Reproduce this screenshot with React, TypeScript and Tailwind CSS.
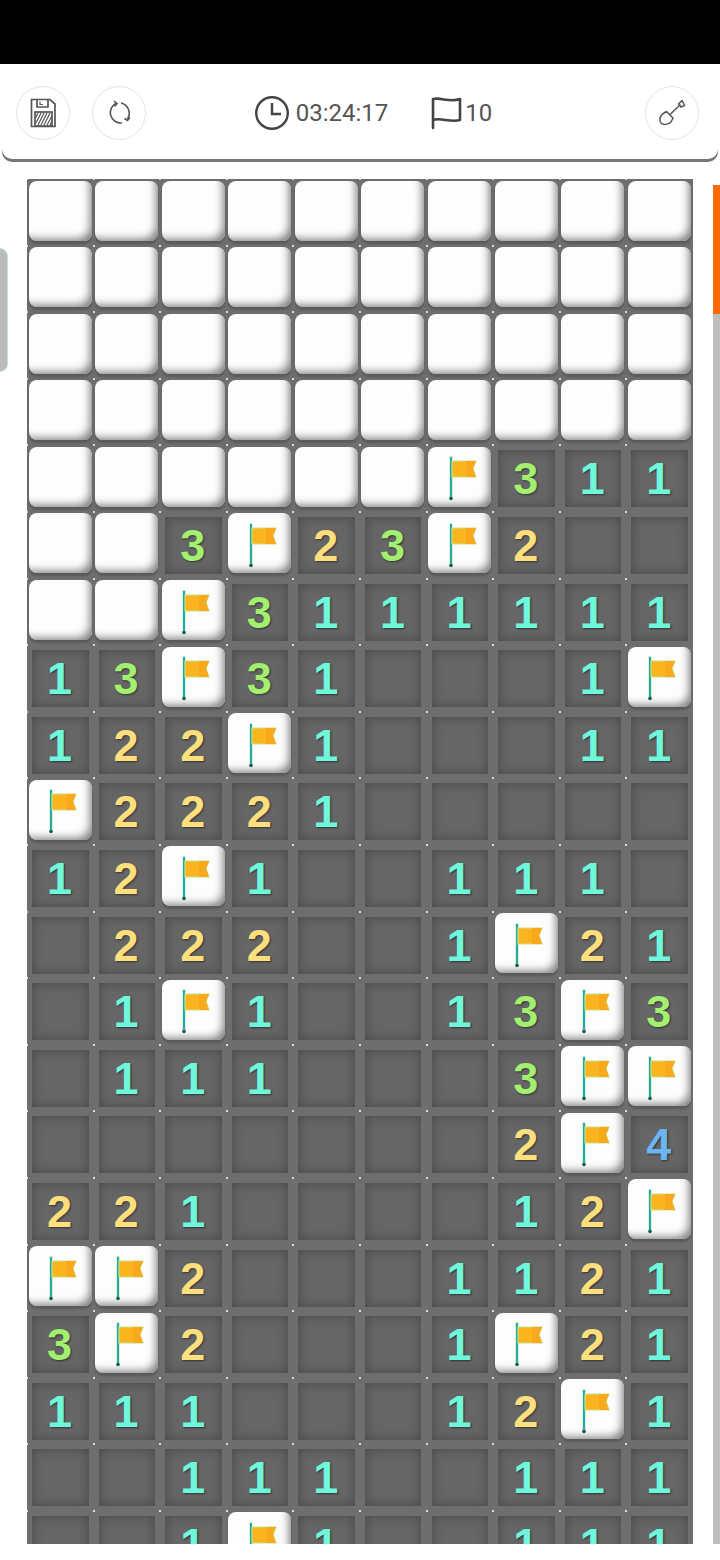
import React from 'react';

const rows = [
  'hhhhhhhhhh',
  'hhhhhhhhhh',
  'hhhhhhhhhh',
  'hhhhhhhhhh',
  'hhhhhhf311',
  'hh3f23f2..',
  'hhf3111111',
  '13f31...1f',
  '122f1...11',
  'f2221.....',
  '12f1..111.',
  '.222..1f21',
  '.1f1..13f3',
  '.111...3ff',
  '.......2f4',
  '221....12f',
  'ff2...1121',
  '3f2...1f21',
  '111...12f1',
  '..111..111',
  '..1f1..111',
];

const numberColors: Record<string, string> = {
  '1': 'text-[#6ff7dc]',
  '2': 'text-[#fddf7e]',
  '3': 'text-[#a3ef6f]',
  '4': 'text-[#6db4f2]',
};

function FlagIcon() {
  return (
    <svg viewBox="0 0 66 66" className="w-[66px] h-[66px]">
      <rect x="22.3" y="11" width="3.4" height="43" fill="#a6e8b0" opacity="0.6" />
      <rect x="23" y="12" width="2" height="42" fill="#2aa7a0" />
      <circle cx="24" cy="53.5" r="1.8" fill="#1c5d4f" />
      <path d="M25 16H49L46 23.5L49 32H25Z" fill="#fbb41e" stroke="#c3e48a" strokeWidth="1.2" />
      <path d="M39 16H49L46 23.5L49 32H39Z" fill="#f9a91c" />
    </svg>
  );
}

function Cell({ value }: { value: string }) {
  const covered = value === 'h' || value === 'f';
  return (
    <div className="relative">
      {covered ? (
        <div className="absolute left-[1.5px] top-[1.5px] w-[63px] h-[60px] rounded-lg bg-[#fdfdfd] shadow-[inset_-7px_-7px_9px_-5px_#808080,0_3px_2px_#5a5a5a] overflow-hidden">
          {value === 'f' && (
            <div className="absolute left-[-1.5px] top-[-1.5px]">
              <FlagIcon />
            </div>
          )}
        </div>
      ) : (
        <div className="absolute left-[5px] top-[5px] w-[56.5px] h-[57px] pr-[1.5px] bg-[#666666] shadow-[inset_0_0_12px_#484848] flex items-center justify-center">
          {value !== '.' && (
            <span className={`font-['Liberation_Sans',sans-serif] text-[45px] leading-none font-bold [text-shadow:1px_1px_2px_#333] ${numberColors[value]}`}>
              {value}
            </span>
          )}
        </div>
      )}
      <div className="absolute left-[-1px] top-[-1px] w-[2px] h-[2px] bg-white rounded-full" />
    </div>
  );
}

function RoundButton({ children }: { children: React.ReactNode }) {
  return (
    <div className="w-[54px] h-[54px] rounded-full bg-white border border-[#e4e4e4] flex items-center justify-center">
      {children}
    </div>
  );
}

export default function App() {
  return (
    <div className="w-[720px] h-[1560px] bg-white overflow-hidden font-['Roboto',sans-serif] flex flex-col">
      <div className="h-16 bg-black shrink-0" />
      <header className="h-[95px] mb-[3px] shrink-0 mx-[2px] bg-white shadow-[0_3px_0_#777] rounded-b-[10px] flex items-center justify-between pl-[14px] pr-[19px] pt-[2px]">
        <div className="flex gap-[22px]">
          <RoundButton>
            <svg width="26" height="30" viewBox="0 0 26 30" fill="none" stroke="#555" strokeWidth="1.7">
              <path d="M1.5 1.5H20L25 6V28.5H1.5Z" />
              <path d="M7 1.5V9H18V1.5" />
              <path d="M10 3.5V6.5H13" strokeWidth="1.2" />
              <rect x="5" y="14" width="17" height="14" fill="#fff" />
              <path d="M6 25L11 15M8 27L14 15M11 27L17 15M14 27L20 15M17 27L22 18M20 27L22 23M5.5 20L8 15" strokeWidth="1.2" />
            </svg>
          </RoundButton>
          <RoundButton>
            <svg width="26" height="26" viewBox="0 0 26 26" fill="none" stroke="#555" strokeWidth="1.6">
              <path d="M10.5 3A10.5 10.5 0 0 0 16 23" />
              <path d="M15 3A10.5 10.5 0 0 1 21.5 19" />
              <path d="M8 1L11 3.5L8.5 6.5" />
              <path d="M18.5 18.5L21.5 20.5L24 17.5" />
            </svg>
          </RoundButton>
        </div>
        <div className="flex items-center ml-[-45px] text-[24px] text-[#555]">
          <svg width="36" height="36" viewBox="0 0 36 36" fill="none" stroke="#444" strokeWidth="2.4" className="mr-[6px]">
            <circle cx="18" cy="18" r="15.8" />
            <path d="M18 8V19H27" />
          </svg>
          <span>03:24:17</span>
          <svg width="32" height="34" viewBox="0 0 32 34" fill="none" stroke="#444" strokeWidth="2.6" strokeLinecap="round" strokeLinejoin="round" className="ml-[42px] mr-[3px]">
            <path d="M3 32V3C11 1 20 7 30 3V24C20 27 11 21 3 24" />
          </svg>
          <span>10</span>
        </div>
        <RoundButton>
          <svg width="28" height="28" viewBox="0 0 28 28" fill="none" stroke="#555" strokeWidth="1.5" strokeLinejoin="round">
            <path d="M8.5 12.5L15 19L13 23C10 26 5 26 3 24C1 22 2 17 4.5 15Z" />
            <path d="M12 15.5L22.5 5.5" />
            <path d="M20.5 5L24 1.5L26.5 6.5L23 8Z" />
          </svg>
        </RoundButton>
      </header>
      <main className="relative h-[1382px] shrink-0 overflow-hidden pt-[17px] pl-[27px]">
        <div className="grid grid-cols-[repeat(10,66.6px)] auto-rows-[66.6px] w-[666px] bg-[#6e6e6e]">
          {rows.flatMap((row, r) =>
            row.split('').map((value, c) => <Cell key={`${r}-${c}`} value={value} />)
          )}
        </div>
        <div className="absolute left-[-8px] top-[86px] w-4 h-[124px] rounded-lg bg-[#bbbbbb] border border-[#b8e6da]" />
        <div className="absolute right-0 top-[23px] w-[7px] h-[1359px] bg-[#bdbdbd]">
          <div className="h-[129px] bg-[#ff6a00]" />
        </div>
      </main>
    </div>
  );
}
